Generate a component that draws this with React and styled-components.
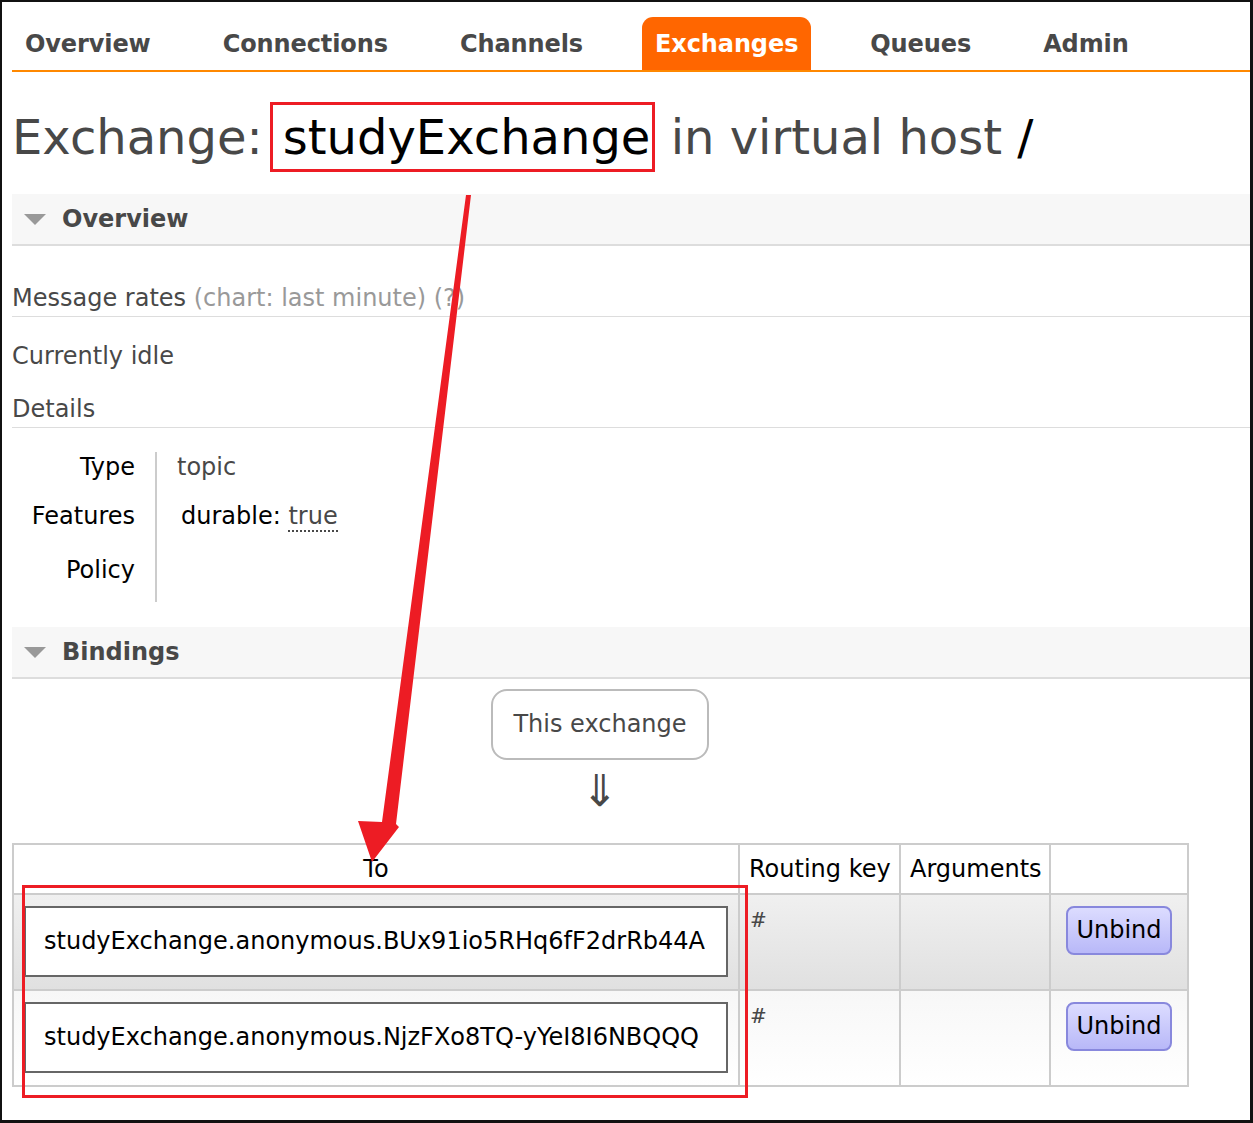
import React from 'react'
import styled, { createGlobalStyle } from 'styled-components'

const GlobalStyle = createGlobalStyle`
  html, body {
    margin: 0;
    padding: 0;
    background: #fff;
  }
  body {
    font-family: 'DejaVu Sans', Verdana, sans-serif;
    color: #484848;
  }
`

const tabs = ['Overview', 'Connections', 'Channels', 'Exchanges', 'Queues', 'Admin']

const details = [
  { label: 'Type', value: 'topic' },
  { label: 'Features', value: 'durable', flag: 'true' },
  { label: 'Policy', value: '' },
]

const bindings = [
  { to: 'studyExchange.anonymous.BUx91io5RHq6fF2drRb44A', key: '#' },
  { to: 'studyExchange.anonymous.NjzFXo8TQ-yYeI8I6NBQQQ', key: '#' },
]

const App = () => {
  return (
    <Frame>
      <GlobalStyle />
      <Page>
        <Nav>
          {tabs.map(tab => (
            <Tab key={tab} active={tab === 'Exchanges'}>
              {tab}
            </Tab>
          ))}
        </Nav>

        <Heading>
          Exchange:<Marked>studyExchange</Marked> in virtual host <Dark>/</Dark>
        </Heading>

        <SectionHeader>
          <Caret />
          Overview
        </SectionHeader>
        <SectionBody>
          <SubTitle>
            Message rates <Muted>(chart: last minute) (?)</Muted>
          </SubTitle>
          <Para>Currently idle</Para>
          <SubTitle>Details</SubTitle>
          <Facts>
            <Labels>
              {details.map(d => (
                <Label key={d.label}>{d.label}</Label>
              ))}
            </Labels>
            <Values>
              {details.map(d => (
                <Value key={d.label} dark={!!d.flag}>
                  {d.value}
                  {d.flag && (
                    <>
                      : <Abbr>{d.flag}</Abbr>
                    </>
                  )}
                </Value>
              ))}
            </Values>
          </Facts>
        </SectionBody>

        <SectionHeader>
          <Caret />
          Bindings
        </SectionHeader>
        <BindingsBody>
          <Source>This exchange</Source>
          <DownArrow>⇓</DownArrow>
          <Table>
            <colgroup>
              <col style={{ width: 726 }} />
              <col style={{ width: 161 }} />
              <col style={{ width: 150 }} />
              <col style={{ width: 138 }} />
            </colgroup>
            <thead>
              <tr>
                <Th center>To</Th>
                <Th>Routing key</Th>
                <Th>Arguments</Th>
                <Th />
              </tr>
            </thead>
            <tbody>
              {bindings.map((b, i) => (
                <Row key={b.to} alt={i % 2 === 1}>
                  <Td>
                    <QueueBox>{b.to}</QueueBox>
                  </Td>
                  <KeyCell>{b.key}</KeyCell>
                  <Td />
                  <ButtonCell>
                    <Unbind>Unbind</Unbind>
                  </ButtonCell>
                </Row>
              ))}
            </tbody>
          </Table>
        </BindingsBody>
      </Page>

      <Annotation viewBox="0 0 1253 1123" width="1253" height="1123">
        <polygon
          points="466,195 471,195 396,824 399,827 372,862 358,821 382,822"
          fill="#ed1c24"
        />
        <rect
          x="23.5"
          y="886.5"
          width="723"
          height="210"
          fill="none"
          stroke="#ed1c24"
          strokeWidth="3"
        />
      </Annotation>
    </Frame>
  )
}

export default App

const Frame = styled.div`
  position: relative;
  width: 1253px;
  height: 1123px;
  box-sizing: border-box;
  border-style: solid;
  border-color: #111;
  border-width: 2px 3px 3px 2px;
  overflow: hidden;
`

const Page = styled.div`
  padding: 15px 0 0 10px;
`

const Nav = styled.div`
  display: flex;
  gap: 46px;
  border-bottom: 2px solid #f80;
`

const Tab = styled.div`
  height: 53px;
  display: flex;
  align-items: center;
  padding: 0 13px;
  font-size: 24px;
  font-weight: bold;
  letter-spacing: -0.1px;
  border-radius: 11px 11px 0 0;
  color: ${p => (p.active ? '#fff' : '#484848')};
  background: ${p => (p.active ? '#f60' : 'transparent')};
`

const Heading = styled.h1`
  margin: 30px 0 22px 0;
  height: 70px;
  font-size: 48px;
  font-weight: normal;
  line-height: 70px;
  white-space: nowrap;
`

const Marked = styled.span`
  display: inline-block;
  color: #000;
  margin-left: 7px;
  border: 3px solid #ed1c24;
  padding: 0 2px 0 10px;
  line-height: 64px;
  vertical-align: top;
`

const Dark = styled.span`
  color: #000;
`

const SectionHeader = styled.div`
  height: 50px;
  display: flex;
  align-items: center;
  gap: 16px;
  padding-left: 12px;
  background: #f7f7f7;
  border-bottom: 2px solid #ddd;
  font-size: 24px;
  font-weight: bold;
`

const Caret = styled.span`
  width: 0;
  height: 0;
  border-left: 11px solid transparent;
  border-right: 11px solid transparent;
  border-top: 11px solid #999;
`

const SectionBody = styled.div`
  padding: 37px 0 25px 0;
`

const SubTitle = styled.div`
  font-size: 24px;
  line-height: 30px;
  padding-bottom: 3px;
  border-bottom: 1px solid #ddd;
  margin-bottom: 24px;
`

const Muted = styled.span`
  color: #999;
`

const Para = styled.div`
  font-size: 24px;
  line-height: 30px;
  margin-bottom: 23px;
`

const Facts = styled.div`
  display: flex;
`

const Labels = styled.div`
  width: 123px;
  padding-right: 20px;
  padding-bottom: 17px;
  border-right: 2px solid #ccc;
  text-align: right;
`

const Label = styled.div`
  font-size: 24px;
  line-height: 30px;
  color: #000;
  margin-bottom: 19px;
  &:last-child {
    padding-top: 5px;
    margin-bottom: 0;
  }
`

const Values = styled.div`
  padding-left: 20px;
`

const Value = styled.div`
  font-size: 24px;
  line-height: 30px;
  height: 30px;
  margin-bottom: 19px;
  color: ${p => (p.dark ? '#000' : '#484848')};
  padding-left: ${p => (p.dark ? '4px' : '0')};
`

const Abbr = styled.span`
  color: #484848;
  border-bottom: 2px dotted #484848;
`

const BindingsBody = styled.div`
  width: 1176px;
  padding-top: 10px;
  text-align: center;
`

const Source = styled.div`
  display: inline-block;
  font-size: 24px;
  padding: 19px 20px;
  border: 2px solid #bbb;
  border-radius: 16px;
  line-height: 29px;
`

const DownArrow = styled.div`
  font-size: 44px;
  line-height: 50px;
  height: 50px;
  margin: 6px 0 27px 0;
  color: #484848;
`

const Table = styled.table`
  width: 1176px;
  table-layout: fixed;
  border-collapse: collapse;
  border: 2px solid #ccc;
  text-align: left;
`

const Th = styled.th`
  height: 50px;
  padding: 0 9px;
  font-size: 24px;
  font-weight: normal;
  color: #000;
  border: 2px solid #ccc;
  text-align: ${p => (p.center ? 'center' : 'left')};
  vertical-align: middle;
  white-space: nowrap;
  box-sizing: border-box;
`

const Row = styled.tr`
  background: ${p =>
    p.alt
      ? 'linear-gradient(#f7f7f7, #ffffff)'
      : 'linear-gradient(#f0f0f0, #e0e0e0)'};
`

const Td = styled.td`
  border: 2px solid #ccc;
  padding: 11px 10px 12px 10px;
  vertical-align: top;
`

const KeyCell = styled(Td)`
  font-family: 'DejaVu Serif', serif;
  font-size: 20px;
  line-height: 24px;
  color: #484848;
  padding: 13px 10px 0 10px;
`

const ButtonCell = styled(Td)`
  text-align: center;
`

const QueueBox = styled.div`
  background: #fff;
  border: 2px solid #666;
  padding: 19px 18px;
  font-size: 24px;
  line-height: 29px;
  color: #000;
  white-space: nowrap;
`

const Unbind = styled.button`
  font-family: 'DejaVu Sans', Verdana, sans-serif;
  font-size: 24px;
  color: #000;
  padding: 8px 8px;
  line-height: 29px;
  background: linear-gradient(#dcdcff, #b8b8f8);
  border: 2px solid #88d;
  border-radius: 8px;
`

const Annotation = styled.svg`
  position: absolute;
  top: -2px;
  left: -2px;
  pointer-events: none;
`
